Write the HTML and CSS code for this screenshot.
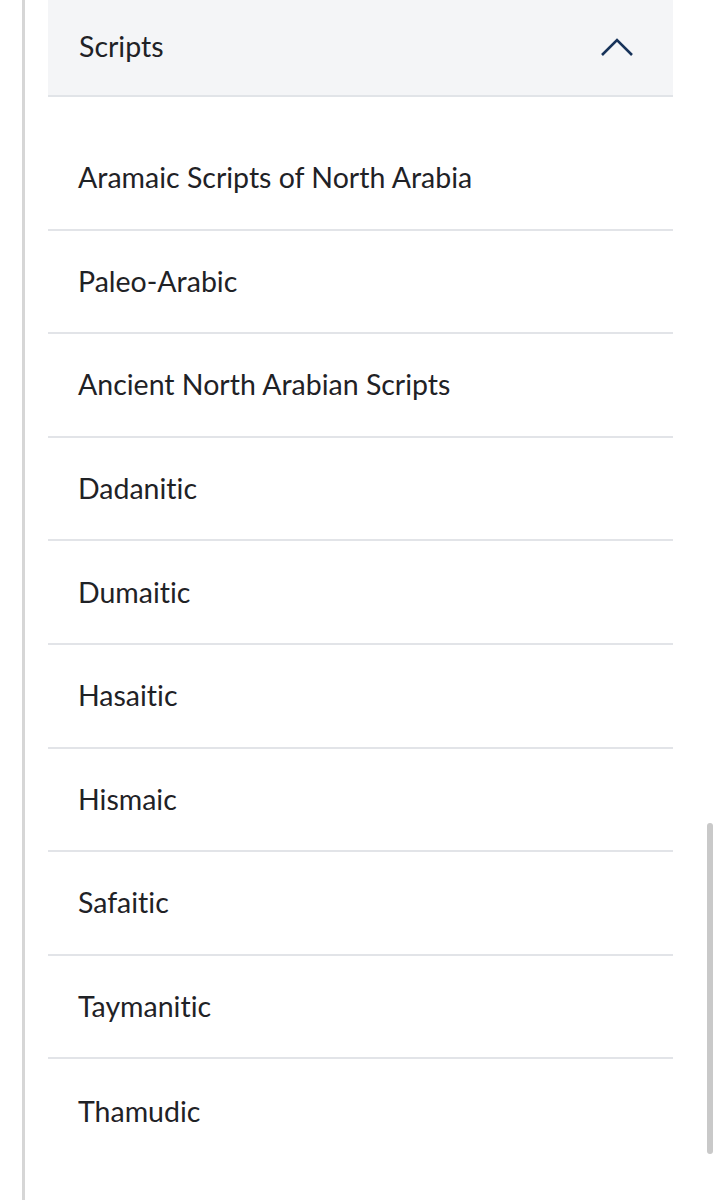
FILE: index.html
```html
<!DOCTYPE html>
<html lang="en">
<head>
<meta charset="utf-8">
<title>Scripts</title>
<link rel="stylesheet" href="styles.css">
</head>
<body>
<div class="page">
  <section class="accordion">
    <button class="accordion-head" type="button">
      <span class="accordion-title">Scripts</span>
      <svg class="chevron" width="34" height="20" viewBox="0 0 34 20" aria-hidden="true">
        <polyline points="2,18 17,3 32,18" fill="none" stroke="#17335a" stroke-width="2.6"/>
      </svg>
    </button>
    <ul class="accordion-list">
      <li class="item">Aramaic Scripts of North Arabia</li>
      <li class="item">Paleo-Arabic</li>
      <li class="item">Ancient North Arabian Scripts</li>
      <li class="item">Dadanitic</li>
      <li class="item">Dumaitic</li>
      <li class="item">Hasaitic</li>
      <li class="item">Hismaic</li>
      <li class="item">Safaitic</li>
      <li class="item">Taymanitic</li>
      <li class="item">Thamudic</li>
    </ul>
  </section>
</div>
<div class="scroll-thumb"></div>
</body>
</html>
```

FILE: styles.css
```css
html, body {
  margin: 0;
  padding: 0;
  background: #ffffff;
}

body {
  font-family: Lato, "Noto Sans", sans-serif;
  font-variant-ligatures: none;
  color: #1f2226;
  height: 1200px;
  overflow: hidden;
}

.page {
  margin-left: 22px;
  border-left: 3px solid #d6d6d6;
  padding-left: 23px;
  min-height: 1200px;
  box-sizing: border-box;
}

.accordion {
  width: 625px;
}

.accordion-head {
  display: flex;
  align-items: center;
  justify-content: space-between;
  width: 100%;
  height: 97px;
  padding: 0 39px 0 31px;
  box-sizing: border-box;
  background: #f4f5f7;
  border: 0;
  border-bottom: 2px solid #e1e4e8;
  font: inherit;
  font-variant-ligatures: none;
  color: inherit;
  cursor: pointer;
}

.accordion-title {
  font-size: 28.5px;
  padding-bottom: 4px;
}

.chevron {
  margin-top: -2px;
}

.accordion-list {
  list-style: none;
  margin: 0;
  padding: 30px 0 0;
}

.item {
  display: flex;
  align-items: center;
  box-sizing: border-box;
  height: 103.6px;
  padding: 0 0 1px 30px;
  font-size: 28.5px;
  border-bottom: 2px solid #e2e4e8;
}

.item:last-child {
  border-bottom: 0;
}

.scroll-thumb {
  position: fixed;
  left: 707px;
  top: 823px;
  width: 6px;
  height: 331px;
  border-radius: 3px;
  background: #c9c9c9;
}
```
